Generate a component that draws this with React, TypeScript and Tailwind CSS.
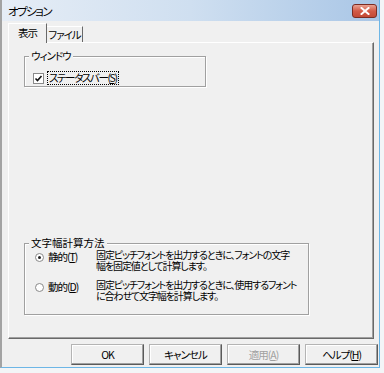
import React from "react";

const jp = "font-['Noto_Sans_CJK_JP','Noto_Sans_CJK_SC',sans-serif] [font-feature-settings:'palt'] tracking-[-1px]";

function Btn({ children, disabled }: { children: React.ReactNode; disabled?: boolean }) {
  return (
    <div
      className={`w-[73px] h-[21px] flex items-center justify-center whitespace-nowrap border border-t-[#b4b4b4] border-l-[#b4b4b4] border-r-[#5a5a5a] border-b-[#5a5a5a] shadow-[inset_-1px_-1px_0_#a0a0a0,inset_1px_1px_0_#ffffff] text-[10.5px] leading-[12px] ${
        disabled ? "text-[#a0a0a0]" : "text-black"
      }`}
    >
      {children}
    </div>
  );
}

function Radio({ checked }: { checked?: boolean }) {
  return (
    <div className="w-[9px] h-[9px] rounded-full border border-[#8a8a8a] bg-white flex items-center justify-center shrink-0">
      {checked && <div className="w-[3px] h-[3px] rounded-full bg-[#222]" />}
    </div>
  );
}

export default function App() {
  return (
    <div className={`w-[384px] h-[373px] bg-[#f3f5f7] overflow-hidden ${jp}`}>
      <div className="w-[380px] h-[368px] flex flex-col bg-[#f0f0f0] border-l-2 border-l-[#a3a3a3] border-r border-r-[#6db6e6] border-b border-b-[#6db6e6]">
        {/* Title bar */}
        <div className="h-[21px] flex items-center justify-between bg-linear-to-r from-[#e6edf6] via-[#cfdff0] to-[#a9c6e6] pl-[6px] pr-[2px]">
          <span className="text-[11.5px] leading-[14px] text-black tracking-[-1.5px]">オプション</span>
          <div className="w-[25px] h-[14px] rounded-[3px] border border-[#7c2c22] bg-linear-to-b from-[#e9a292] via-[#d25a47] to-[#c34a36] flex items-center justify-center">
            <svg width="10" height="8" viewBox="0 0 10 8">
              <path d="M1.5 1 L8.5 7 M8.5 1 L1.5 7" stroke="#fff" strokeWidth="2" strokeLinecap="square" />
            </svg>
          </div>
        </div>

        {/* Body */}
        <div className="flex-1 flex flex-col pl-[6px]">
          {/* Tabs */}
          <div className="h-[21px] flex items-end">
            <div className="relative z-10 -mb-px w-[39px] h-[20px] bg-[#f0f0f0] border-t border-l border-r border-t-white border-l-white border-r-[#696969] flex items-center justify-center whitespace-nowrap text-[10.5px] leading-[12px] pb-[2px]">
              表示
            </div>
            <div className="w-[36px] h-[16px] border-t border-r border-t-white border-r-[#696969] flex items-center justify-center whitespace-nowrap text-[10.5px] leading-[12px]">
              ファイル
            </div>
          </div>

          {/* Panel */}
          <div className="w-[366px] h-[297px] border border-t-white border-l-white border-r-[#696969] border-b-[#696969] shadow-[inset_-1px_-1px_0_#a0a0a0] flex flex-col">
            {/* Group 1 */}
            <div className="relative mt-[13px] ml-[15px] w-[182px] h-[31px] border border-[#a0a0a0] shadow-[1px_1px_0_#ffffff,inset_1px_1px_0_#ffffff]">
              <span className="absolute -top-[7px] left-[4px] bg-[#f0f0f0] px-[2px] whitespace-nowrap text-[10.5px] leading-[12px]">ウィンドウ</span>
              <div className="flex items-center mt-[15px] ml-[8px] gap-[4px]">
                <div className="w-[11px] h-[11px] border border-[#8a8a8a] bg-white flex items-center justify-center shrink-0">
                  <svg width="9" height="9" viewBox="0 0 9 9">
                    <path d="M1.5 4.5 L3.5 6.5 L7.5 2" stroke="#111" strokeWidth="1.6" fill="none" />
                  </svg>
                </div>
                <span className="outline-1 outline-dotted outline-black px-[1px] whitespace-nowrap text-[10.5px] leading-[12px] tracking-[-1.4px]">
                  ステータスバー(<span className="underline underline-offset-1">S</span>)
                </span>
              </div>
            </div>

            {/* Group 2 */}
            <div className="relative mt-[156px] ml-[15px] w-[285px] h-[72px] border border-[#a0a0a0] shadow-[1px_1px_0_#ffffff,inset_1px_1px_0_#ffffff] flex flex-col pt-[5px]">
              <span className="absolute -top-[7px] left-[4px] bg-[#f0f0f0] px-[2px] whitespace-nowrap text-[10.5px] leading-[12px] tracking-[0px]">文字幅計算方法</span>
              <div className="flex items-start">
                <div className="w-[71px] shrink-0 flex items-center gap-[4px] pl-[10px] mt-[2px]">
                  <Radio checked />
                  <span className="whitespace-nowrap text-[10.5px] leading-[12px]">
                    静的(<span className="underline underline-offset-1">T</span>)
                  </span>
                </div>
                <div className="flex flex-col text-[10px] leading-[11px] whitespace-nowrap tracking-[-1.1px]">
                  <span>固定ピッチフォントを出力するときに、フォントの文字</span>
                  <span>幅を固定値として計算します。</span>
                </div>
              </div>
              <div className="flex items-start mt-[8px]">
                <div className="w-[71px] shrink-0 flex items-center gap-[4px] pl-[10px] mt-[2px]">
                  <Radio />
                  <span className="whitespace-nowrap text-[10.5px] leading-[12px]">
                    動的(<span className="underline underline-offset-1">D</span>)
                  </span>
                </div>
                <div className="flex flex-col text-[10px] leading-[11px] whitespace-nowrap tracking-[-1.1px]">
                  <span>固定ピッチフォントを出力するときに、使用するフォント</span>
                  <span>に合わせて文字幅を計算します。</span>
                </div>
              </div>
            </div>
          </div>

          {/* Buttons */}
          <div className="flex gap-[5px] mt-[5px] ml-[63px]">
            <Btn>OK</Btn>
            <Btn>キャンセル</Btn>
            <Btn disabled>
              適用(<span className="underline underline-offset-1">A</span>)
            </Btn>
            <Btn>
              ヘルプ(<span className="underline underline-offset-1">H</span>)
            </Btn>
          </div>
        </div>
      </div>
    </div>
  );
}
